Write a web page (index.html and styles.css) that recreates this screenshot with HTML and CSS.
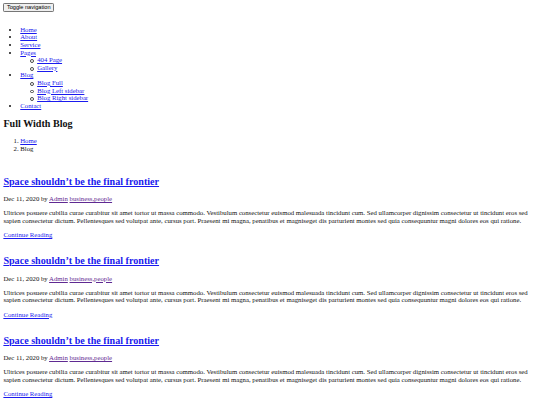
FILE: index.html
```html
<!DOCTYPE html>
<html>
<head>
<meta charset="utf-8">
<title>Full Width Blog</title>
<link rel="stylesheet" href="styles.css">
</head>
<body>
<nav class="navbar">
  <button type="button" class="navbar-toggle">Toggle navigation</button>
  <div class="navbar-collapse">
    <ul class="nav">
      <li><a href="#">Home</a></li>
      <li><a href="#">About</a></li>
      <li><a href="#">Service</a></li>
      <li><a href="#">Pages</a>
        <ul class="sub">
          <li><a href="#">404 Page</a></li>
          <li><a href="#">Gallery</a></li>
        </ul>
      </li>
      <li><a href="#">Blog</a>
        <ul class="sub">
          <li><a href="#">Blog Full</a></li>
          <li><a href="#">Blog Left sidebar</a></li>
          <li><a href="#">Blog Right sidebar</a></li>
        </ul>
      </li>
      <li><a href="#">Contact</a></li>
    </ul>
  </div>
</nav>
<section class="page-title">
  <h2>Full Width Blog</h2>
  <ol class="breadcrumb">
    <li><a href="#">Home</a></li>
    <li>Blog</li>
  </ol>
</section>
<section class="posts">
  <article class="post">
    <h3><a href="#">Space shouldn’t be the final frontier</a></h3>
    <p class="meta">Dec 11, 2020 by <a class="visited" href="#">Admin</a> <a class="visited" href="#">business,people</a></p>
    <p>Ultrices posuere cubilia curae curabitur sit amet tortor ut massa commodo. Vestibulum consectetur euismod malesuada tincidunt cum. Sed ullamcorper dignissim consectetur ut tincidunt eros sed sapien consectetur dictum. Pellentesques sed volutpat ante, cursus port. Praesent mi magna, penatibus et magniseget dis parturient montes sed quia consequuntur magni dolores eos qui ratione.</p>
    <p><a href="#">Continue Reading</a></p>
  </article>
  <article class="post">
    <h3><a href="#">Space shouldn’t be the final frontier</a></h3>
    <p class="meta">Dec 11, 2020 by <a class="visited" href="#">Admin</a> <a class="visited" href="#">business,people</a></p>
    <p>Ultrices posuere cubilia curae curabitur sit amet tortor ut massa commodo. Vestibulum consectetur euismod malesuada tincidunt cum. Sed ullamcorper dignissim consectetur ut tincidunt eros sed sapien consectetur dictum. Pellentesques sed volutpat ante, cursus port. Praesent mi magna, penatibus et magniseget dis parturient montes sed quia consequuntur magni dolores eos qui ratione.</p>
    <p><a href="#">Continue Reading</a></p>
  </article>
  <article class="post">
    <h3><a href="#">Space shouldn’t be the final frontier</a></h3>
    <p class="meta">Dec 11, 2020 by <a class="visited" href="#">Admin</a> <a class="visited" href="#">business,people</a></p>
    <p>Ultrices posuere cubilia curae curabitur sit amet tortor ut massa commodo. Vestibulum consectetur euismod malesuada tincidunt cum. Sed ullamcorper dignissim consectetur ut tincidunt eros sed sapien consectetur dictum. Pellentesques sed volutpat ante, cursus port. Praesent mi magna, penatibus et magniseget dis parturient montes sed quia consequuntur magni dolores eos qui ratione.</p>
    <p><a href="#">Continue Reading</a></p>
  </article>
</section>
</body>
</html>
```
FILE: styles.css
```css
html, body {
  overflow: hidden;
}
body {
  margin: 3.375px;
  font-family: "Liberation Serif", "Times New Roman", serif;
  font-size: 6.75px;
  line-height: 7.594px;
  color: #111;
  background: #fff;
}
a {
  color: #1a1aee;
}
a.visited {
  color: #5f2a92;
}
.navbar-toggle {
  display: block;
  box-sizing: border-box;
  height: 8.9px;
  margin: 0;
  padding: 0 2.5px;
  font-family: "Liberation Sans", Arial, sans-serif;
  font-size: 5.625px;
  line-height: 7px;
  color: #000;
  background: #efefef;
  border: 0.5px solid #767676;
  border-radius: 1.2px;
}
.nav {
  margin: 13.5px 0 6.75px;
  padding-left: 16.875px;
}
.sub {
  margin: 0;
  padding-left: 16.875px;
  list-style: none;
}
.sub li {
  position: relative;
}
.sub li::before {
  content: "";
  position: absolute;
  left: -7px;
  top: 3px;
  width: 1.9px;
  height: 1.9px;
  border: 0.45px solid #444;
  border-radius: 50%;
}
.page-title h2 {
  font-size: 10.125px;
  line-height: 11.39px;
  margin: 8.4px 0;
}
.breadcrumb {
  margin: 6.75px 0;
  padding-left: 16.875px;
}
.posts {
  padding-top: 8.44px;
}
.post {
  padding-bottom: 8.44px;
}
.post h3 {
  font-size: 10.125px;
  line-height: 11.39px;
  margin: 7.9px 0;
}
.post p {
  margin: 6.75px 0;
}
.post p:last-child {
  margin-bottom: 0;
}
```
